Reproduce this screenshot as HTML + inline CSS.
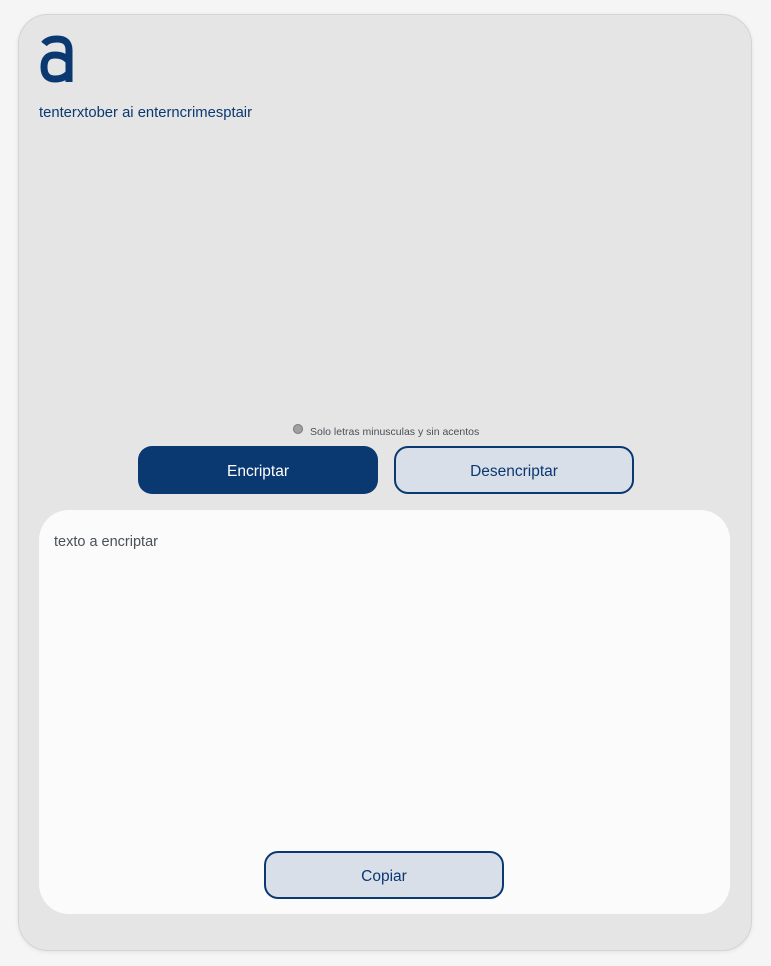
<!DOCTYPE html>
<html><head><style>
body{margin:0;width:771px;height:966px;background:#f5f5f5;font-family:"Liberation Sans",sans-serif;position:relative;overflow:hidden}
.card{position:absolute;left:18px;top:14px;width:732px;height:935px;background:#e5e5e5;border:1px solid #d4d4d4;border-radius:30px;box-shadow:0 1px 4px rgba(0,0,0,.08)}
.t{position:absolute;left:39px;top:105px;font-size:14.8px;color:#0a3871}
.hint{position:absolute;top:426px;font-size:10.5px;color:#495057}
.dot{position:absolute;left:293px;top:424px;width:8px;height:8px;border-radius:50%;background:#a0a0a0;border:1px solid #777}
.btn{position:absolute;width:240px;height:48px;border-radius:14px;box-sizing:border-box;font-size:15.5px;display:flex;align-items:center;justify-content:center;padding-top:3px}
.p{background:#0a3871;color:#fff}
.s{background:#d8dfe8;color:#0a3871;border:2px solid #0a3871}
.panel{position:absolute;left:39px;top:510px;width:691px;height:404px;background:#fbfbfb;border-radius:30px}
.pt{position:absolute;left:54px;top:534px;font-size:14.5px;color:#495057}
</style></head><body>
<div class="card"></div>
<svg style="position:absolute;left:38px;top:33px" width="38" height="52" viewBox="0 0 38 52">
<path d="M6 11 Q10 6 19 6 Q31 6 31 17 V49" fill="none" stroke="#0a3871" stroke-width="7"/>
<path d="M31 28 Q26 22 17 22 Q6 22 6 34 Q6 46 17 46 Q26 46 31 40" fill="none" stroke="#0a3871" stroke-width="7"/>
</svg>
<div class="t">tenterxtober ai enterncrimesptair</div>
<div class="dot"></div>
<div class="hint" style="left:310px">Solo letras minusculas y sin acentos</div>
<div class="btn p" style="left:138px;top:446px">Encriptar</div>
<div class="btn s" style="left:394px;top:446px">Desencriptar</div>
<div class="panel"></div>
<div class="pt">texto a encriptar</div>
<div class="btn s" style="left:264px;top:851px">Copiar</div>
</body></html>
